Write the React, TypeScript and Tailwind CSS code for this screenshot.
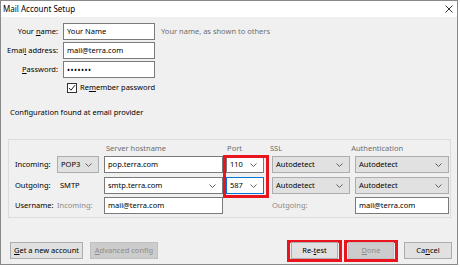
import React from 'react';

const font = { fontFamily: '"Noto Sans", "Open Sans", sans-serif' };

const Chevron = () => (
  <svg width="7" height="4" viewBox="0 0 7 4" className="shrink-0">
    <path d="M0.5 0.5 L3.5 3.5 L6.5 0.5" stroke="#606060" strokeWidth="1" fill="none" />
  </svg>
);

const TextBox = ({ value, className = '' }: { value: string; className?: string }) => (
  <div className={`h-[17px] border border-[#7a7a7a] bg-white flex items-center px-[3px] text-black ${className}`}>
    {value}
  </div>
);

const Select = ({ value, className = '', gray = false, focus = false }: { value: string; className?: string; gray?: boolean; focus?: boolean }) => (
  <div
    className={`h-[17px] border flex items-center justify-between pl-[3px] pr-[6px] ${
      gray ? 'bg-[#e1e1e1] border-[#adadad]' : focus ? 'bg-white border-[#0078d7]' : 'bg-white border-[#7a7a7a]'
    } ${className}`}
  >
    <span>{value}</span>
    <Chevron />
  </div>
);

const Button = ({ children, className = '', disabled = false }: { children: React.ReactNode; className?: string; disabled?: boolean }) => (
  <div
    className={`h-[17px] border flex items-center justify-center ${
      disabled ? 'bg-[#cccccc] border-[#bfbfbf] text-[#8c8c8c]' : 'bg-[#e1e1e1] border-[#adadad] text-black'
    } ${className}`}
  >
    {children}
  </div>
);

export default function App() {
  return (
    <div className="w-[460px] h-[267px] bg-white text-[7.5px] leading-none text-black" style={font}>
      <div className="w-[458px] h-[265px] border border-[#8a8a8a] flex flex-col">
        {/* title bar */}
        <div className="h-[16px] bg-white flex items-center justify-between pl-[2px] pr-[4px]">
          <span className="text-[8px]">Mail Account Setup</span>
          <svg width="8" height="8" viewBox="0 0 8 8">
            <path d="M0.5 0.5 L7.5 7.5 M7.5 0.5 L0.5 7.5" stroke="#333" strokeWidth="1" />
          </svg>
        </div>

        <div className="flex-1 bg-[#f0f0f0] relative">
          {/* identity */}
          <div className="pt-[6px] flex flex-col gap-[2px]">
            <div className="flex items-center">
              <div className="w-[57px] text-right">Your <u>n</u>ame:</div>
              <TextBox value="Your Name" className="ml-[5px] w-[92px]" />
              <span className="ml-[6px] text-[#6d6d6d]">Your name, as shown to others</span>
            </div>
            <div className="flex items-center">
              <div className="w-[57px] text-right">Emai<u>l</u> address:</div>
              <TextBox value="mail@terra.com" className="ml-[5px] w-[92px]" />
            </div>
            <div className="flex items-center">
              <div className="w-[57px] text-right"><u>P</u>assword:</div>
              <TextBox value="•••••••" className="ml-[5px] w-[92px] tracking-[0.5px] text-[8px]" />
            </div>
            <div className="flex items-center ml-[66px] mt-[3px]">
              <div className="w-[10px] h-[10px] border border-[#333] bg-white flex items-center justify-center">
                <svg width="8" height="8" viewBox="0 0 8 8">
                  <path d="M1 4 L3 6.2 L7 1.2" stroke="#222" strokeWidth="1" fill="none" />
                </svg>
              </div>
              <span className="ml-[3px]">Re<u>m</u>ember password</span>
            </div>
          </div>

          <div className="ml-[9px] mt-[16px]">Configuration found at email provider</div>

          {/* server settings */}
          <div className="ml-[7px] mt-[22px] w-[443px] h-[79px] border border-[#dcdcdc] pt-[5px]">
            <div className="flex text-[#6d6d6d]">
              <span className="ml-[97px]">Server hostname</span>
              <span className="ml-[61px]">Port</span>
              <span className="ml-[28px]">SSL</span>
              <span className="ml-[69px]">Authentication</span>
            </div>
            <div className="flex items-center mt-[4px]">
              <span className="w-[48px] pl-[6px]">Incoming:</span>
              <Select value="POP3" gray className="w-[42px]" />
              <TextBox value="pop.terra.com" className="ml-[5px] w-[119px]" />
              <Select value="110" className="ml-[3px] w-[38px]" />
              <Select value="Autodetect" gray className="ml-[8px] w-[78px]" />
              <Select value="Autodetect" gray className="ml-[5px] w-[94px]" />
            </div>
            <div className="flex items-center mt-[4px]">
              <span className="w-[48px] pl-[6px]">Outgoing:</span>
              <span className="w-[42px] pl-[3px]">SMTP</span>
              <Select value="smtp.terra.com" className="ml-[5px] w-[119px]" />
              <Select value="587" focus className="ml-[3px] w-[38px]" />
              <Select value="Autodetect" gray className="ml-[8px] w-[78px]" />
              <Select value="Autodetect" gray className="ml-[5px] w-[94px]" />
            </div>
            <div className="flex items-center mt-[3px]">
              <span className="w-[48px] pl-[6px]">Username:</span>
              <span className="w-[42px] text-[#8a8a8a]">Incoming:</span>
              <TextBox value="mail@terra.com" className="ml-[5px] w-[119px]" />
              <span className="ml-[49px] w-[78px] text-[#8a8a8a]">Outgoing:</span>
              <TextBox value="mail@terra.com" className="ml-[5px] w-[94px]" />
            </div>
          </div>

          {/* red highlight around ports */}
          <div className="absolute left-[222px] top-[138px] w-[46px] h-[43px] border-[3px] border-[#e8141e]" />

          {/* buttons */}
          <div className="flex items-center mt-[22px]">
            <Button className="ml-[9px] w-[73px]"><span><u>G</u>et a new account</span></Button>
            <Button disabled className="ml-[7px] w-[68px]"><span><u>A</u>dvanced config</span></Button>
            <div className="ml-[129px] border-[3px] border-[#e8141e] p-[0px] w-[55px] h-[22px] flex items-center justify-center">
              <Button className="w-[47px]"><span>Re-<u>t</u>est</span></Button>
            </div>
            <div className="ml-[2px] border-[3px] border-[#e8141e] w-[54px] h-[22px] flex items-center justify-center">
              <Button disabled className="w-[46px]"><span><u>D</u>one</span></Button>
            </div>
            <Button className="ml-[6px] w-[48px]"><span>Ca<u>n</u>cel</span></Button>
          </div>
        </div>
      </div>
    </div>
  );
}
